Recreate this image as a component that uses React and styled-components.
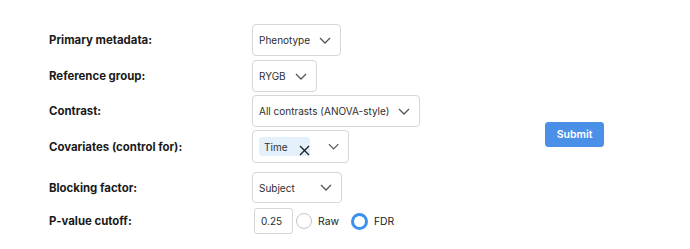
import React from "react";
import styled, { createGlobalStyle } from "styled-components";

const Global = createGlobalStyle`
  html, body { margin: 0; padding: 0; background: #fff; }
  body { font-family: Inter, "Noto Sans", "Liberation Sans", sans-serif; color: #222; }
`;

const Page = styled.div`
  display: flex;
  align-items: center;
  padding: 24px 0 0 49px;
`;

const Form = styled.div`
  display: grid;
  grid-template-columns: 203px auto;
  align-items: center;
  width: 496px;
`;

const Label = styled.div`
  font-size: 11.4px;
  font-weight: 700;
  color: #1a1a1a;
  margin-top: ${(p) => p.$mt || 0}px;
`;

const Cell = styled.div`
  display: flex;
  align-items: center;
  margin-top: ${(p) => p.$mt || 0}px;
`;

const SelectBox = styled.div`
  box-sizing: border-box;
  display: inline-flex;
  align-items: center;
  gap: 9px;
  height: ${(p) => p.$h || 32}px;
  width: ${(p) => (p.$w ? `${p.$w}px` : "auto")};
  padding: 0 9px 0 6px;
  border: 1px solid #d6d6d6;
  border-radius: 4px;
  background: #fff;
  font-size: 10px;
  color: #2e2e2e;
`;

const SelectText = styled.span`
  flex: 1;
  white-space: nowrap;
`;

const Chip = styled.span`
  display: flex;
  align-items: center;
  height: 19px;
  width: 54px;
  box-sizing: border-box;
  padding-left: 5px;
  background: #e4f0fb;
  border-radius: 3px;
  font-size: 10px;
  color: #2e2e2e;
  position: relative;
`;

const ChipX = styled.svg`
  position: absolute;
  left: 40px;
  top: 8px;
`;

const Spacer = styled.span`
  flex: 1;
`;

const NumberInput = styled.div`
  box-sizing: border-box;
  width: 39px;
  height: 26px;
  margin-left: 2px;
  border: 1px solid #d6d6d6;
  border-radius: 3px;
  display: flex;
  align-items: center;
  padding-left: 6px;
  font-size: 10px;
  color: #2e2e2e;
`;

const Radio = styled.span`
  box-sizing: border-box;
  width: ${(p) => (p.$on ? 17 : 16)}px;
  height: ${(p) => (p.$on ? 17 : 16)}px;
  border-radius: 50%;
  border: ${(p) => (p.$on ? "3px solid #3d8ff0" : "1px solid #c4c4c4")};
  margin-left: ${(p) => p.$ml}px;
  background: #fff;
`;

const RadioLabel = styled.span`
  font-size: 10.4px;
  color: #222;
  margin-left: 6px;
`;

const SubmitCol = styled.div`
  display: flex;
  align-items: center;
  margin-top: 10px;
`;

const Submit = styled.button`
  width: 59px;
  height: 25px;
  padding: 0;
  border: 1px solid #4a8fe6;
  border-radius: 3px;
  background: #4a90e8;
  color: #fff;
  font-family: inherit;
  font-size: 10.5px;
  font-weight: 600;
`;

const Chevron = () => (
  <svg width="12" height="7" viewBox="0 0 12 7">
    <polyline points="1,1 6,6 11,1" fill="none" stroke="#555" strokeWidth="1.3" />
  </svg>
);

const Select = ({ w, h, text }) => (
  <SelectBox $w={w} $h={h}>
    <SelectText>{text}</SelectText>
    <Chevron />
  </SelectBox>
);

export default function App() {
  return (
    <>
      <Global />
      <Page>
        <Form>
          <Label>Primary metadata:</Label>
          <Cell>
            <Select text="Phenotype" />
          </Cell>

          <Label $mt={4}>Reference group:</Label>
          <Cell $mt={4}>
            <Select text="RYGB" />
          </Cell>

          <Label $mt={3}>Contrast:</Label>
          <Cell $mt={3}>
            <Select text="All contrasts (ANOVA-style)" />
          </Cell>

          <Label $mt={3}>Covariates (control for):</Label>
          <Cell $mt={3}>
            <SelectBox $w={97} $h={33}>
              <Chip>
                Time
                <ChipX width="11" height="11" viewBox="0 0 11 11">
                  <path d="M1 1 L10 10 M10 1 L1 10" stroke="#222" strokeWidth="1.4" fill="none" />
                </ChipX>
              </Chip>
              <Spacer />
              <Chevron />
            </SelectBox>
          </Cell>

          <Label $mt={9}>Blocking factor:</Label>
          <Cell $mt={9}>
            <Select w={90} h={31} text="Subject" />
          </Cell>

          <Label $mt={5}>P-value cutoff:</Label>
          <Cell $mt={5}>
            <NumberInput>0.25</NumberInput>
            <Radio $ml={3} />
            <RadioLabel>Raw</RadioLabel>
            <Radio $on $ml={12} />
            <RadioLabel>FDR</RadioLabel>
          </Cell>
        </Form>
        <SubmitCol>
          <Submit>Submit</Submit>
        </SubmitCol>
      </Page>
    </>
  );
}
